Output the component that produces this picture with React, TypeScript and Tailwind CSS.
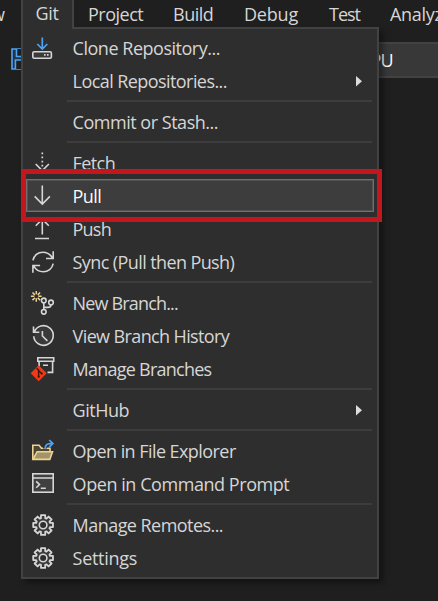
import type { ReactNode } from "react";

const line = "#d6d6d6";
const blue = "#4ea3f3";

function Icon({ children }: { children?: ReactNode }) {
  return (
    <svg
      className="h-[33px] w-7 shrink-0"
      viewBox="0 0 28 33"
      fill="none"
      stroke={line}
      strokeWidth="1.6"
    >
      {children}
    </svg>
  );
}

function gearPath(cx: number, cy: number) {
  const points: string[] = [];
  for (let i = 0; i < 8; i++) {
    const a = (i * Math.PI) / 4;
    const spots: [number, number][] = [
      [-0.3, 7.2],
      [-0.21, 10.1],
      [0.21, 10.1],
      [0.3, 7.2],
    ];
    for (const [d, r] of spots) {
      points.push(`${(cx + r * Math.sin(a + d)).toFixed(2)} ${(cy - r * Math.cos(a + d)).toFixed(2)}`);
    }
  }
  return `M${points.join("L")}Z`;
}

const CloneIcon = () => (
  <Icon>
    <path stroke={blue} strokeWidth="1.7" d="M13.3 6.5V18M8.3 13l5 5 5-5" />
    <rect x="3.8" y="20.8" width="18.6" height="6.4" rx="1.4" fill="#3a3a3a" />
    <path d="M15 23.9h1.6M18 23.9h1.6" />
  </Icon>
);
const FetchIcon = () => (
  <Icon>
    <path strokeWidth="1.7" strokeDasharray="1.7 2.4" d="M13.3 6.5V24" />
    <path d="M6.7 18l6.6 6.6 6.6-6.6" />
  </Icon>
);
const PullIcon = () => (
  <Icon>
    <path d="M13.3 6.5V25M5.7 17.4l7.6 7.6 7.6-7.6" />
  </Icon>
);
const PushIcon = () => (
  <Icon>
    <path d="M13.3 7V22.5M6.8 13.7l6.5-6.5 6.5 6.5M6 26.5h14" />
  </Icon>
);
const SyncIcon = () => (
  <Icon>
    <path d="M3.9 15.4C4.9 10.5 9 7.2 13.8 7.2c4.3 0 7.6 2.1 9.5 5.8M24.2 6.3v7.2H17M24.2 18.6c-1 4.9-5.1 8.2-9.9 8.2-4.3 0-7.6-2.1-9.5-5.8M3.9 27.7v-7.2h7.2" />
  </Icon>
);
const NewBranchIcon = () => (
  <Icon>
    <path
      stroke="#ecd391"
      strokeWidth="1.5"
      d="M7.3 4.9v3.4M7.3 12.3v3.4M1.9 10.3h3.4M9.3 10.3h3.4M3.5 6.5l2.4 2.4M8.7 11.7l2.4 2.4M11.1 6.5L8.7 8.9M5.9 11.7l-2.4 2.4"
    />
    <circle cx="14.8" cy="14.4" r="2.3" />
    <circle cx="22" cy="16.4" r="2.3" />
    <circle cx="14.8" cy="25.8" r="2.3" />
    <path d="M14.8 16.7v6.8M22 18.7c0 2.5-1.4 2.7-3.4 2.7h-3.8" />
  </Icon>
);
const HistoryIcon = () => (
  <Icon>
    <circle cx="14.5" cy="17" r="9" fill="#3a3a3a" stroke="none" />
    <path d="M5.2 13.3a9.8 9.8 0 1 1-.5 4M4.5 7.6v5.6h5.8M13.4 12v5l5 4.8" />
  </Icon>
);
const ManageBranchesIcon = () => (
  <Icon>
    <path d="M8.8 5.8h15.9v3.4H8.8zM10.1 9.2v6M23.6 9.2v11.2h-5.1M14 13.2h5" />
    <path fill="#f03a17" stroke="none" d="M9.7 13.3l8 8-8 8-8-8z" />
    <path stroke="#3a1610" strokeWidth="1.4" d="M7.6 16.2l2 2.1v7M9.8 18.7l3 3" />
    <circle cx="9.7" cy="24.7" r="1.1" fill="#3a1610" stroke="none" />
    <circle cx="12.8" cy="21.6" r="1.1" fill="#3a1610" stroke="none" />
  </Icon>
);
const FolderIcon = () => (
  <Icon>
    <path
      stroke="#ecd391"
      fill="#4c4637"
      d="M3.8 25.3V11.2h6.3l2.3 3H21v3.4"
    />
    <path stroke="#ecd391" fill="#a3936a" d="M4 25.4l4.1-7.7h15.4l-2.7 7.7z" />
    <path stroke="#2e2e2e" strokeWidth="4" d="M16 14.5c0-3 2-4.7 5-4.7h2.5" />
    <path stroke={blue} strokeWidth="1.7" d="M16.2 14.8c0-3.4 1.8-5.2 5-5.2h2.2M20.2 6l3.7 3.6-3.7 3.6" />
  </Icon>
);
const TerminalIcon = () => (
  <Icon>
    <rect x="3.8" y="6.8" width="20.4" height="18.4" fill="#404040" />
    <path d="M3.8 11h20.4M7.2 14.4l3.3 3.2-3.3 3.2M11.8 21.3h5" />
  </Icon>
);
const GearIcon = () => (
  <Icon>
    <path fill="#3a3a3a" strokeLinejoin="round" strokeWidth="1.8" d={gearPath(14.1, 17)} />
    <circle cx="14.1" cy="17" r="3.8" fill="#2e2e2e" />
  </Icon>
);

type ItemProps = {
  label: string;
  tracking: string;
  icon?: ReactNode;
  submenu?: boolean;
  selected?: boolean;
};

function MenuItem({ label, tracking, icon, submenu, selected }: ItemProps) {
  return (
    <div
      className={`flex h-[33px] items-center pl-[3px] ${
        selected
          ? "bg-[#3d3d3d] text-[#fafafa] shadow-[inset_0_0_0_1px_#707070,inset_0_0_0_2px_#525252]"
          : ""
      }`}
    >
      {icon ?? <Icon />}
      <span className={`ml-[15.6px] flex-1 whitespace-nowrap pt-0.5 ${tracking}`}>{label}</span>
      {submenu && (
        <svg className="mt-0.5 mr-3 h-[11px] w-1.5" viewBox="0 0 6 11">
          <path fill="#dcdcdc" d="M0 0l6 5.2L0 10.4z" />
        </svg>
      )}
    </div>
  );
}

function Separator() {
  return (
    <div className="flex h-2 items-start pt-[3px] pr-0.5 pl-[41px]">
      <div className="h-0.5 w-full bg-[#3d3d3d]" />
    </div>
  );
}

export default function App() {
  return (
    <div className="relative h-[601px] w-[438px] overflow-hidden bg-[#1f1f1f] font-['Open_Sans','Noto_Sans',sans-serif] text-[18px] leading-[25px] text-[#d6d6d6]">
      <nav className="flex h-[27px] items-center pt-px whitespace-nowrap">
        <span className="-ml-[9px] w-[97px] shrink-0">w</span>
        <span className="w-[85px] shrink-0 tracking-[-0.5px]">Project</span>
        <span className="w-[71px] shrink-0 tracking-[-0.5px]">Build</span>
        <span className="w-[85px] shrink-0 tracking-[-0.2px]">Debug</span>
        <span className="w-[61px] shrink-0 tracking-[-1px]">Test</span>
        <span className="tracking-[-0.3px]">Analyze</span>
      </nav>

      <div className="flex pt-[15px]">
        <svg
          className="mt-1.5 ml-[11px] h-[22px] w-[22px] shrink-0"
          viewBox="0 0 22 22"
          fill="none"
          stroke={blue}
          strokeWidth="1.6"
        >
          <path fill="#243442" d="M1 1h17l3 3v17H1z" />
          <path fill="#1f1f1f" d="M5.5 1v7.5h11V1M4.4 21v-9h13.2v9" />
        </svg>
        <div className="ml-[200px] flex h-9 flex-1 items-center border-y-2 border-[#424242] bg-[#383838] pl-[127px] text-[#fafafa]">
          <span className="tracking-[-0.8px]">CPU</span>
        </div>
      </div>

      <div className="absolute top-[27px] left-[21px] h-[552px] w-[358px] border-2 border-[#424242] bg-[#2e2e2e] px-[3px] pt-0.5 shadow-[4px_4px_6px_rgba(0,0,0,0.4)]">
        <MenuItem label="Clone Repository..." tracking="tracking-[-0.48px]" icon={<CloneIcon />} />
        <MenuItem label="Local Repositories..." tracking="tracking-[-0.57px]" submenu />
        <Separator />
        <MenuItem label="Commit or Stash..." tracking="tracking-[-0.48px]" />
        <Separator />
        <MenuItem label="Fetch" tracking="tracking-[-0.6px]" icon={<FetchIcon />} />
        <MenuItem label="Pull" tracking="tracking-[-0.6px]" icon={<PullIcon />} selected />
        <MenuItem label="Push" tracking="tracking-[-0.8px]" icon={<PushIcon />} />
        <MenuItem label="Sync (Pull then Push)" tracking="tracking-[-0.6px]" icon={<SyncIcon />} />
        <Separator />
        <MenuItem label="New Branch..." tracking="tracking-[-0.84px]" icon={<NewBranchIcon />} />
        <MenuItem label="View Branch History" tracking="tracking-[-0.62px]" icon={<HistoryIcon />} />
        <MenuItem label="Manage Branches" tracking="tracking-[-0.76px]" icon={<ManageBranchesIcon />} />
        <Separator />
        <MenuItem label="GitHub" tracking="tracking-[-0.5px]" submenu />
        <Separator />
        <MenuItem label="Open in File Explorer" tracking="tracking-[-0.56px]" icon={<FolderIcon />} />
        <MenuItem label="Open in Command Prompt" tracking="tracking-[-0.44px]" icon={<TerminalIcon />} />
        <Separator />
        <MenuItem label="Manage Remotes..." tracking="tracking-[-0.55px]" icon={<GearIcon />} />
        <MenuItem label="Settings" tracking="tracking-[-0.3px]" icon={<GearIcon />} />
      </div>

      <div className="absolute top-0 left-[21px] flex h-[29px] w-[53px] items-start border-x-2 border-[#424242] bg-[#2e2e2e] pt-px pl-[12.5px] tracking-[-0.3px]">
        Git
      </div>

      <div className="absolute top-[169px] left-[21px] h-[53px] w-[361px] border-[5px] border-[#c4161c]" />
    </div>
  );
}
